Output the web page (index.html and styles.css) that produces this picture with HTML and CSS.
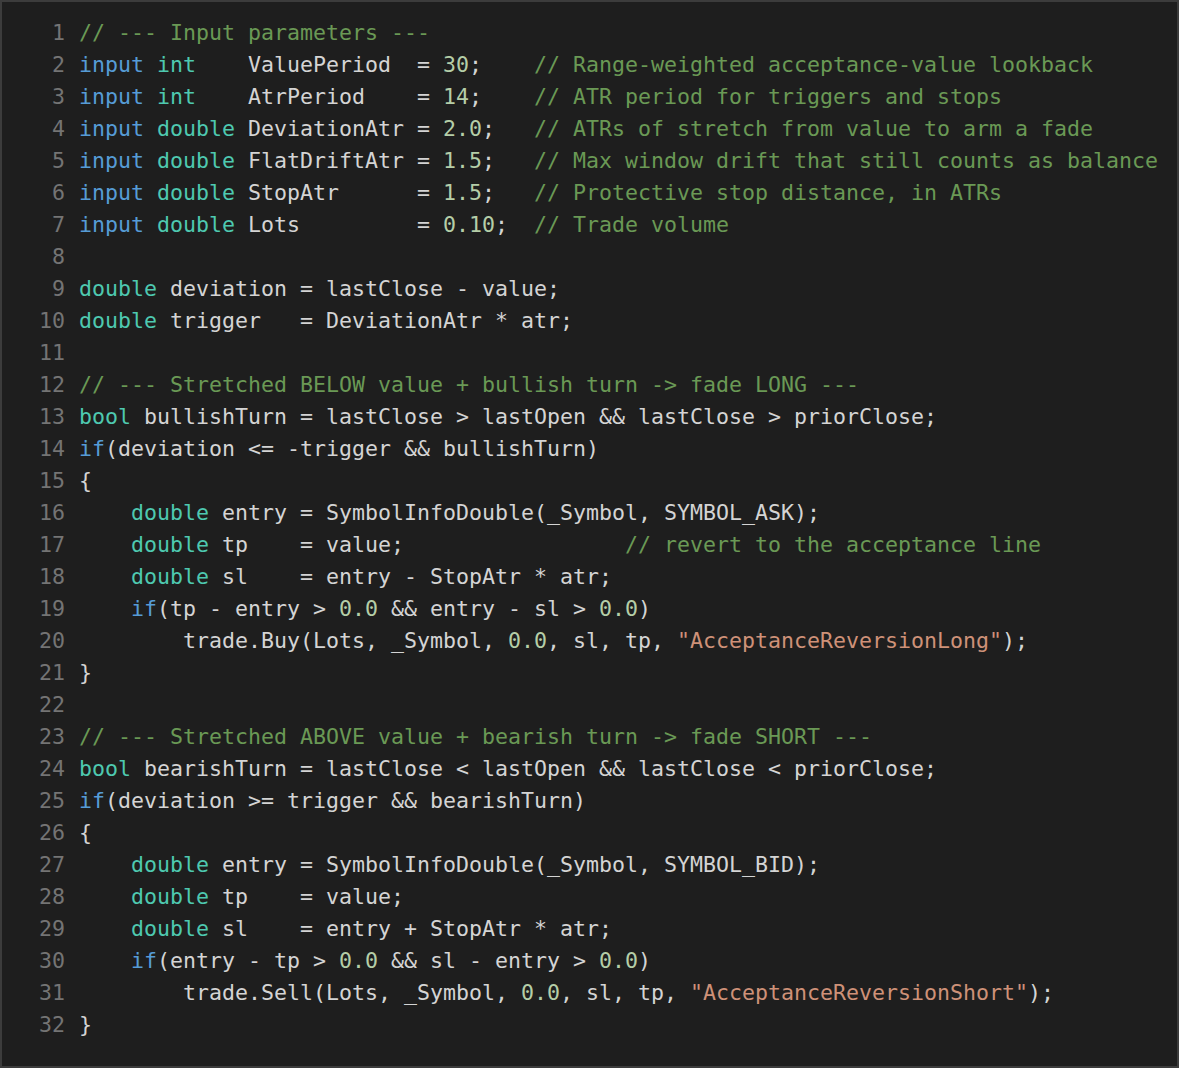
FILE: index.html
```html
<!DOCTYPE html>
<html>
<head>
<meta charset="utf-8">
<link rel="stylesheet" href="styles.css">
</head>
<body>
<div class="editor">
<div class="ln"><span class="num">1</span><span class="code"><span class="c">// --- Input parameters ---</span></span></div>
<div class="ln"><span class="num">2</span><span class="code"><span class="k">input</span> <span class="t">int</span>    ValuePeriod  = <span class="n">30</span>;    <span class="c">// Range-weighted acceptance-value lookback</span></span></div>
<div class="ln"><span class="num">3</span><span class="code"><span class="k">input</span> <span class="t">int</span>    AtrPeriod    = <span class="n">14</span>;    <span class="c">// ATR period for triggers and stops</span></span></div>
<div class="ln"><span class="num">4</span><span class="code"><span class="k">input</span> <span class="t">double</span> DeviationAtr = <span class="n">2.0</span>;   <span class="c">// ATRs of stretch from value to arm a fade</span></span></div>
<div class="ln"><span class="num">5</span><span class="code"><span class="k">input</span> <span class="t">double</span> FlatDriftAtr = <span class="n">1.5</span>;   <span class="c">// Max window drift that still counts as balance</span></span></div>
<div class="ln"><span class="num">6</span><span class="code"><span class="k">input</span> <span class="t">double</span> StopAtr      = <span class="n">1.5</span>;   <span class="c">// Protective stop distance, in ATRs</span></span></div>
<div class="ln"><span class="num">7</span><span class="code"><span class="k">input</span> <span class="t">double</span> Lots         = <span class="n">0.10</span>;  <span class="c">// Trade volume</span></span></div>
<div class="ln"><span class="num">8</span><span class="code"></span></div>
<div class="ln"><span class="num">9</span><span class="code"><span class="t">double</span> deviation = lastClose - value;</span></div>
<div class="ln"><span class="num">10</span><span class="code"><span class="t">double</span> trigger   = DeviationAtr * atr;</span></div>
<div class="ln"><span class="num">11</span><span class="code"></span></div>
<div class="ln"><span class="num">12</span><span class="code"><span class="c">// --- Stretched BELOW value + bullish turn -&gt; fade LONG ---</span></span></div>
<div class="ln"><span class="num">13</span><span class="code"><span class="t">bool</span> bullishTurn = lastClose &gt; lastOpen &amp;&amp; lastClose &gt; priorClose;</span></div>
<div class="ln"><span class="num">14</span><span class="code"><span class="k">if</span>(deviation &lt;= -trigger &amp;&amp; bullishTurn)</span></div>
<div class="ln"><span class="num">15</span><span class="code">{</span></div>
<div class="ln"><span class="num">16</span><span class="code">    <span class="t">double</span> entry = SymbolInfoDouble(_Symbol, SYMBOL_ASK);</span></div>
<div class="ln"><span class="num">17</span><span class="code">    <span class="t">double</span> tp    = value;                 <span class="c">// revert to the acceptance line</span></span></div>
<div class="ln"><span class="num">18</span><span class="code">    <span class="t">double</span> sl    = entry - StopAtr * atr;</span></div>
<div class="ln"><span class="num">19</span><span class="code">    <span class="k">if</span>(tp - entry &gt; <span class="n">0.0</span> &amp;&amp; entry - sl &gt; <span class="n">0.0</span>)</span></div>
<div class="ln"><span class="num">20</span><span class="code">        trade.Buy(Lots, _Symbol, <span class="n">0.0</span>, sl, tp, <span class="s">"AcceptanceReversionLong"</span>);</span></div>
<div class="ln"><span class="num">21</span><span class="code">}</span></div>
<div class="ln"><span class="num">22</span><span class="code"></span></div>
<div class="ln"><span class="num">23</span><span class="code"><span class="c">// --- Stretched ABOVE value + bearish turn -&gt; fade SHORT ---</span></span></div>
<div class="ln"><span class="num">24</span><span class="code"><span class="t">bool</span> bearishTurn = lastClose &lt; lastOpen &amp;&amp; lastClose &lt; priorClose;</span></div>
<div class="ln"><span class="num">25</span><span class="code"><span class="k">if</span>(deviation &gt;= trigger &amp;&amp; bearishTurn)</span></div>
<div class="ln"><span class="num">26</span><span class="code">{</span></div>
<div class="ln"><span class="num">27</span><span class="code">    <span class="t">double</span> entry = SymbolInfoDouble(_Symbol, SYMBOL_BID);</span></div>
<div class="ln"><span class="num">28</span><span class="code">    <span class="t">double</span> tp    = value;</span></div>
<div class="ln"><span class="num">29</span><span class="code">    <span class="t">double</span> sl    = entry + StopAtr * atr;</span></div>
<div class="ln"><span class="num">30</span><span class="code">    <span class="k">if</span>(entry - tp &gt; <span class="n">0.0</span> &amp;&amp; sl - entry &gt; <span class="n">0.0</span>)</span></div>
<div class="ln"><span class="num">31</span><span class="code">        trade.Sell(Lots, _Symbol, <span class="n">0.0</span>, sl, tp, <span class="s">"AcceptanceReversionShort"</span>);</span></div>
<div class="ln"><span class="num">32</span><span class="code">}</span></div>
</div>
</body>
</html>
```
FILE: styles.css
```css
html, body {
  margin: 0;
  padding: 0;
  background: #1e1e1e;
}
.editor {
  box-sizing: border-box;
  width: 1179px;
  height: 1068px;
  border: 2px solid #3c3c3c;
  background: #1e1e1e;
  padding: 15px 0 0 37px;
  font-family: "DejaVu Sans Mono", "Liberation Mono", monospace;
  font-size: 21.6px;
  color: #d4d4d4;
  overflow: hidden;
}
.ln {
  display: flex;
  height: 32px;
  line-height: 32px;
  white-space: pre;
}
.num {
  width: 26px;
  flex: none;
  text-align: right;
  color: #747474;
  margin-right: 14px;
}
.code {
  white-space: pre;
}
.k { color: #569cd6; }
.t { color: #4ec9b0; }
.c { color: #6a9955; }
.n { color: #b5cea8; }
.s { color: #ce9178; }
```
